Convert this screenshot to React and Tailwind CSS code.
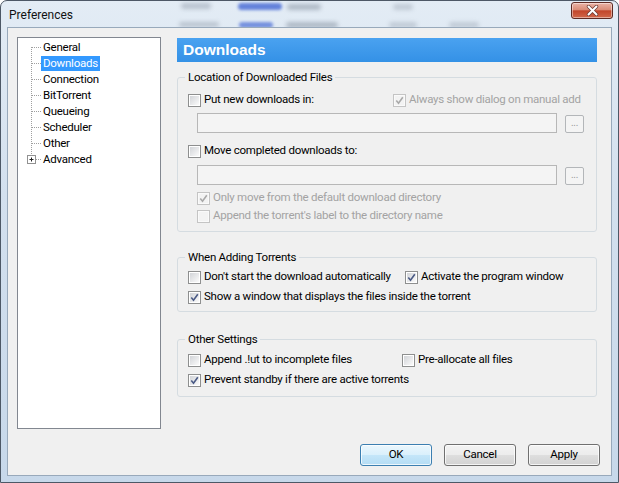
import React from 'react';

function Check({ disabled }) {
  return (
    <svg width="9" height="9" viewBox="0 0 9 9" className="block">
      <path d="M1.3 4.6 L3.5 7.2 L7.8 1.2" fill="none" stroke={disabled ? '#a9a9a9' : '#4a5a85'} strokeWidth="1.6" />
    </svg>
  );
}

function CheckBox({ checked = false, disabled = false }) {
  return (
    <span className={`flex h-[13px] w-[13px] shrink-0 border p-px ${disabled ? 'border-[#c4c4c4] bg-[#fafafa]' : 'border-[#8e8f8f] bg-white'}`}>
      <span className={`flex h-full w-full items-center justify-center ${disabled ? 'bg-[#f3f3f3]' : 'bg-gradient-to-br from-[#d2d4d8] to-[#fbfbfb]'}`}>
        {checked && <Check disabled={disabled} />}
      </span>
    </span>
  );
}

function Option({ label, checked, disabled, className = '' }) {
  return (
    <label className={`flex h-[16px] items-center gap-[3px] ${disabled ? 'text-[#a3a3a3]' : 'text-black'} ${className}`}>
      <CheckBox checked={checked} disabled={disabled} />
      <span className="whitespace-nowrap">{label}</span>
    </label>
  );
}

function PathField() {
  return (
    <div className="ml-[9px] flex items-end">
      <div className="h-[20px] w-[360px] border border-[#b7b7b7] bg-[#f4f4f4]" />
      <div className="ml-[8px] flex h-[18px] w-[19px] items-center justify-center rounded-[2px] border border-[#b3b6b9] bg-[#f4f4f4] pb-[3px] text-[10px] leading-none text-[#9a9a9a]">
        ...
      </div>
    </div>
  );
}

function Group({ title, children, className = '' }) {
  return (
    <fieldset className={`rounded-[3px] border border-[#d5dce1] px-[10px] ${className}`}>
      <legend className="-ml-[3px] px-[3px] leading-[15px]">{title}</legend>
      {children}
    </fieldset>
  );
}

function TreeRow({ label, selected, first, last, expandable }) {
  return (
    <div className="flex h-[16px] items-center">
      <svg width="23" height="16" className="shrink-0">
        <line x1="13.5" y1={first ? 8 : 0} x2="13.5" y2={last ? (expandable ? 4 : 8) : 16} stroke="#a0a0a0" strokeDasharray="1 1" />
        <line x1={expandable ? 18 : 14} y1="8.5" x2="23" y2="8.5" stroke="#a0a0a0" strokeDasharray="1 1" />
        {expandable && (
          <g>
            <rect x="9.5" y="4.5" width="8" height="8" fill="#fff" stroke="#919191" />
            <path d="M11.5 8.5h4M13.5 6.5v4" stroke="#222" />
          </g>
        )}
      </svg>
      <span className={`px-[2px] leading-[15px] ${selected ? 'bg-[#3399ff] text-white' : 'text-black'}`}>{label}</span>
    </div>
  );
}

function Btn({ children, primary }) {
  return (
    <button
      className={`h-[22px] w-[72px] rounded-[3px] border text-black shadow-[inset_0_0_0_1px_rgba(255,255,255,0.75)] ${
        primary
          ? 'border-[#3c7fb1] bg-[linear-gradient(#ebf7fd_0%,#daf0fc_48%,#c4e6f9_52%,#b4dcf4_100%)]'
          : 'border-[#707070] bg-[linear-gradient(#f3f3f3_0%,#ececec_48%,#dedede_52%,#d2d2d2_100%)]'
      }`}
    >
      {children}
    </button>
  );
}

const tree = ['General', 'Downloads', 'Connection', 'BitTorrent', 'Queueing', 'Scheduler', 'Other', 'Advanced'];

export default function App() {
  return (
    <div className="relative flex h-[483px] w-[619px] flex-col overflow-hidden rounded-t-[7px] border border-[#4d5866] bg-[linear-gradient(180deg,#e3ecf5_0%,#d3e0ee_40%,#c7d8ea_100%)] font-['Roboto','Liberation_Sans',sans-serif] text-[11.5px] tracking-[-0.25px] text-black">
      {/* blurred content behind the glass frame */}
      <div className="pointer-events-none absolute left-[180px] top-[2px] h-[6px] w-[30px] rounded-full bg-[#8f9aa8] opacity-50 blur-[2px]" />
      <div className="pointer-events-none absolute left-[237px] top-[2px] h-[7px] w-[44px] rounded-sm bg-[#2f56d0] opacity-70 blur-[1.5px]" />
      <div className="pointer-events-none absolute left-[286px] top-[3px] h-[6px] w-[34px] rounded-full bg-[#7c8898] opacity-50 blur-[2px]" />
      <div className="pointer-events-none absolute left-[392px] top-[3px] h-[6px] w-[20px] rounded-full bg-[#8f9aa8] opacity-40 blur-[2px]" />
      <div className="pointer-events-none absolute left-[178px] top-[21px] h-[5px] w-[40px] rounded-full bg-[#8f9aa8] opacity-50 blur-[2px]" />
      <div className="pointer-events-none absolute left-[238px] top-[21px] h-[6px] w-[34px] rounded-sm bg-[#2f56d0] opacity-60 blur-[1.5px]" />
      <div className="pointer-events-none absolute left-[285px] top-[21px] h-[6px] w-[52px] rounded-full bg-[#7c8898] opacity-50 blur-[2px]" />
      <div className="pointer-events-none absolute left-[388px] top-[21px] h-[6px] w-[28px] rounded-full bg-[#8f9aa8] opacity-40 blur-[2px]" />
      <div className="pointer-events-none absolute left-[448px] top-[21px] h-[6px] w-[30px] rounded-full bg-[#8f9aa8] opacity-40 blur-[2px]" />

      <div className="relative flex h-[26px] shrink-0 items-start justify-between pl-[8px] pr-[5px]">
        <span className="mt-[7px] text-[12px] leading-[15px] tracking-normal text-[#111]">Preferences</span>
        <div className="mt-[1px] flex h-[17px] w-[42px] items-center justify-center rounded-[3px] border border-[#5e2b24] bg-[linear-gradient(#eab3a6_0%,#d98b76_46%,#c2452a_52%,#d1684a_100%)] shadow-[inset_0_0_0_1px_rgba(255,255,255,0.45)]">
          <svg width="13" height="11" viewBox="0 0 13 11">
            <path d="M2.5 1.5 L10.5 9.5 M10.5 1.5 L2.5 9.5" stroke="#6b3a33" strokeWidth="3.4" strokeLinecap="round" />
            <path d="M2.5 1.5 L10.5 9.5 M10.5 1.5 L2.5 9.5" stroke="#fff" strokeWidth="2" strokeLinecap="round" />
          </svg>
        </div>
      </div>

      <div className="relative mx-[6px] mb-[6px] flex flex-1 flex-col border border-[#98a9bb] bg-[#f0f0f0] pl-[9px] pr-[10px] pt-[9px]">
        <div className="flex">
          <div className="h-[392px] w-[144px] shrink-0 border border-[#828790] bg-white pt-[1px]">
            {tree.map((t, i) => (
              <TreeRow
                key={t}
                label={t}
                selected={t === 'Downloads'}
                first={i === 0}
                last={i === tree.length - 1}
                expandable={t === 'Advanced'}
              />
            ))}
          </div>

          <div className="ml-[16px] flex w-[420px] flex-col">
            <div className="mt-[1px] flex h-[24px] items-center bg-[linear-gradient(#4aa2f0,#3491e6)] pl-[6px] font-['Liberation_Sans',sans-serif] text-[15.5px] font-bold tracking-normal text-white">
              Downloads
            </div>

            <Group title="Location of Downloaded Files" className="mt-[8px] pb-[7px]">
              <div className="mt-[7px] flex">
                <div className="w-[205px]">
                  <Option label="Put new downloads in:" />
                </div>
                <Option label="Always show dialog on manual add" checked disabled />
              </div>
              <div className="mt-[5px]">
                <PathField />
              </div>
              <Option label="Move completed downloads to:" className="mt-[10px]" />
              <div className="mt-[6px]">
                <PathField />
              </div>
              <Option label="Only move from the default download directory" checked disabled className="ml-[9px] mt-[5px]" />
              <Option label="Append the torrent's label to the directory name" disabled className="ml-[9px] mt-[2px]" />
            </Group>

            <Group title="When Adding Torrents" className="mt-[18px] pb-[6px]">
              <div className="mt-[4px] flex">
                <div className="w-[217px]">
                  <Option label="Don't start the download automatically" />
                </div>
                <Option label="Activate the program window" checked />
              </div>
              <Option label="Show a window that displays the files inside the torrent" checked className="mt-[4px]" />
            </Group>

            <Group title="Other Settings" className="mt-[20px] pb-[8px]">
              <div className="mt-[5px] flex">
                <div className="w-[214px]">
                  <Option label="Append .!ut to incomplete files" />
                </div>
                <Option label="Pre-allocate all files" />
              </div>
              <Option label="Prevent standby if there are active torrents" checked className="mt-[4px]" />
            </Group>
          </div>
        </div>

        <div className="mt-[15px] flex justify-end gap-[12px] pr-[1px]">
          <Btn primary>OK</Btn>
          <Btn>Cancel</Btn>
          <Btn>Apply</Btn>
        </div>
      </div>
    </div>
  );
}
